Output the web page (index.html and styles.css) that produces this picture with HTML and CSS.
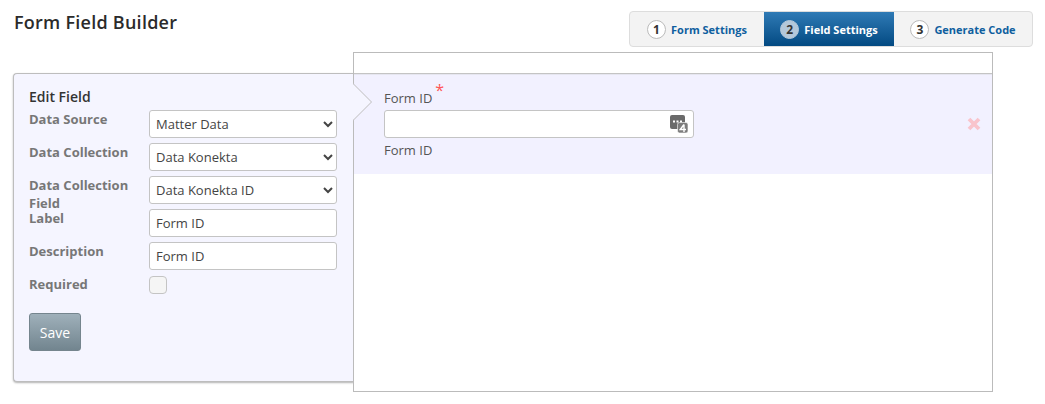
FILE: index.html
```html
<!DOCTYPE html>
<html lang="en">
<head>
<meta charset="utf-8">
<title>Form Field Builder</title>
<link rel="stylesheet" href="styles.css">
</head>
<body>
<div class="page">
  <header class="top">
    <h1 class="title">Form Field Builder</h1>
    <nav class="steps">
      <a class="step"><span class="num">1</span>Form Settings</a>
      <a class="step active"><span class="num">2</span>Field Settings</a>
      <a class="step"><span class="num">3</span>Generate Code</a>
    </nav>
  </header>
  <main class="main">
    <section class="panel">
      <h2 class="panel-title">Edit Field</h2>
      <div class="row"><label class="lbl">Data Source</label><select class="ctl"><option>Matter Data</option></select></div>
      <div class="row"><label class="lbl">Data Collection</label><select class="ctl"><option>Data Konekta</option></select></div>
      <div class="row"><label class="lbl">Data Collection Field</label><select class="ctl"><option>Data Konekta ID</option></select></div>
      <div class="row"><label class="lbl">Label</label><input class="ctl" value="Form ID"></div>
      <div class="row"><label class="lbl">Description</label><input class="ctl" value="Form ID"></div>
      <div class="row row-check"><label class="lbl">Required</label><span class="check"></span></div>
      <button class="save">Save</button>
    </section>
    <section class="canvas">
      <div class="field">
        <svg class="notch" width="20" height="38" viewBox="0 0 20 38"><path d="M0 0.5 L18.5 19 L0 37.5" fill="#f5f5ff" stroke="#bdbdbd" stroke-width="1"/></svg>
        <div class="field-body">
          <div class="field-label">Form ID<span class="req">*</span></div>
          <div class="input-mock">
            <svg class="merge" width="18" height="18" viewBox="0 0 18 18">
              <rect x="0" y="0" width="15" height="14" rx="2" fill="#6a6a6a"/>
              <rect x="3" y="5.5" width="2" height="2" fill="#fff"/><rect x="6.5" y="5.5" width="2" height="2" fill="#fff"/><rect x="10" y="5.5" width="2" height="2" fill="#fff"/>
              <rect x="7.5" y="7.5" width="10.5" height="10.5" rx="2" fill="#7c7c7c" stroke="#fff" stroke-width="0.6"/>
              <path d="M14 9.5 L10.2 14.5 H16 M14 9.5 V17" fill="none" stroke="#fff" stroke-width="1.4"/>
            </svg>
          </div>
          <div class="field-desc">Form ID</div>
        </div>
        <svg class="remove" width="16" height="16" viewBox="0 0 16 16"><path d="M3 3 L13 13 M13 3 L3 13" stroke="#f9c4cc" stroke-width="3.8"/></svg>
      </div>
    </section>
  </main>
</div>
</body>
</html>
```
FILE: styles.css
```css
* { box-sizing: border-box; }
html, body { margin: 0; padding: 0; background: #fff; }
body { font-family: "Open Sans", "Noto Sans", sans-serif; color: #333; overflow: hidden; }
.page { width: 1045px; height: 404px; padding: 11px 12px 0 13px; }
.top { display: flex; justify-content: space-between; align-items: flex-start; height: 41px; }
.title { margin: 0 0 0 1px; font-size: 18px; font-weight: 600; line-height: 22px; color: #2b2b2b; letter-spacing: 0.25px; }
.steps { display: flex; width: 404px; height: 36px; border: 1px solid #ddd; border-radius: 4px; background: #f3f3f3; overflow: hidden; }
.step { display: flex; align-items: center; justify-content: center; gap: 5px; font-size: 11px; font-weight: 700; color: #0f5f9f; white-space: nowrap; }
.step:nth-child(1) { width: 134px; }
.step:nth-child(2) { width: 130px; }
.step:nth-child(3) { flex: 1; }
.step.active { background: linear-gradient(#2f7ab5, #034a82); color: #fff; }
.num { display: flex; align-items: center; justify-content: center; width: 19px; height: 19px; border-radius: 50%; border: 1px solid #bbb; background: #fff; color: #333; font-size: 12px; font-weight: 700; }
.active .num { background: #b4c8da; border-color: #b4c8da; }
.main { display: flex; align-items: flex-start; }
.panel { width: 341px; height: 309px; margin-top: 21px; padding: 14px 16px 0 15px; background: #f5f5ff; border: 1px solid #bdbdbd; border-right: 0; border-radius: 4px 0 0 4px; box-shadow: 0 1px 2px rgba(0,0,0,.3); }
.panel-title { margin: 0 0 5px; font-size: 14px; font-weight: 600; line-height: 17px; color: #333; }
.row { display: flex; align-items: flex-start; height: 33px; }
.row .lbl { flex: 0 0 120px; width: 120px; font-size: 13px; font-weight: 700; line-height: 18px; color: #777; }
.ctl { width: 188px; height: 28px; padding: 0 6px; background: #fff; border: 1px solid #c4c4c4; border-radius: 3px; font: 400 13px "Open Sans", sans-serif; color: #444; outline: none; }
select.ctl { padding: 0 2px; }
.row-check { height: 29px; }
.check { width: 18px; height: 18px; margin-top: 1px; background: #f5f5f5; border: 1px solid #c4c4c4; border-radius: 4px; }
.save { display: block; width: 52px; height: 38px; margin-top: 9px; padding: 0; background: linear-gradient(#9fb0ba, #72858f); border: 1px solid #75858e; border-radius: 3px; color: #fff; font: 400 14px "Open Sans", sans-serif; }
.canvas { width: 640px; height: 340px; margin-top: 0; margin-left: -1px; background: #fff; border: 1px solid #bbb; padding-top: 20px; }
.field { position: relative; display: flex; justify-content: space-between; align-items: center; height: 101px; background: #f2f1ff; border-top: 1px solid #c4c4c4; box-shadow: inset 0 1px 0 #e6e6f0; }
.notch { position: absolute; left: -1px; top: 9px; }
.field-body { padding: 0 0 0 30px; width: 340px; margin-top: -7px; }
.field-label { position: relative; font-size: 13px; line-height: 18px; color: #555; height: 24px; padding-top: 6px; }
.req { position: relative; top: -7px; margin-left: 3px; color: #f55; font-size: 16px; font-weight: 400; line-height: 0; }
.input-mock { position: relative; width: 310px; height: 28px; margin-top: 3px; background: #fff; border: 1px solid #c4c4c4; border-radius: 3px; }
.merge { position: absolute; right: 5px; top: 4px; }
.field-desc { margin-top: 3px; font-size: 13px; line-height: 18px; color: #555; }
.remove { margin-right: 10px; }
```
